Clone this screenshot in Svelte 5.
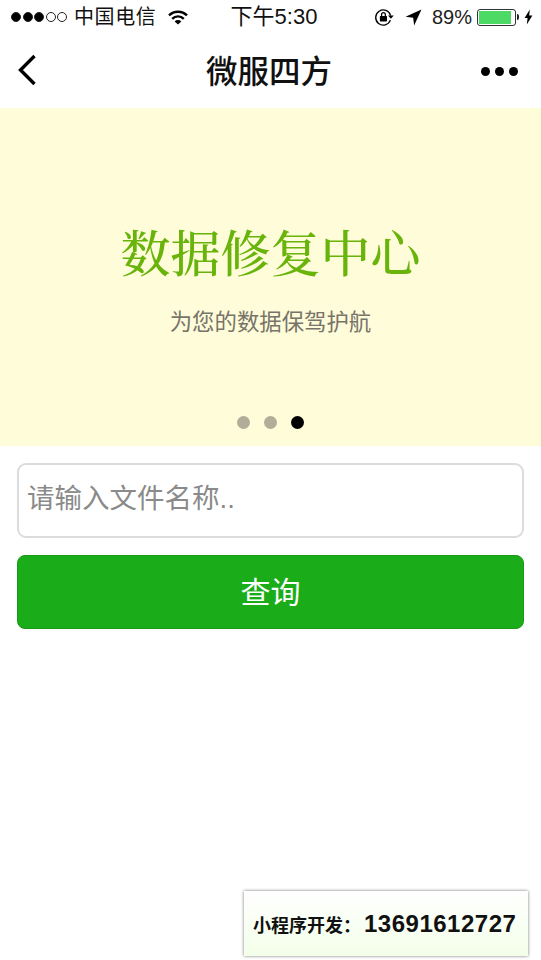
<script>
  const dots = [false, false, true];
</script>

<div class="page">
  <header class="status">
    <div class="side">
      <span class="signal">
        <i class="on"></i><i class="on"></i><i class="on"></i><i></i><i></i>
      </span>
      <span class="carrier">中国电信</span>
      <svg class="wifi" width="20" height="15" viewBox="0 0 20 15">
        <path d="M1 5.4a12.8 12.8 0 0 1 18 0" fill="none" stroke="#000" stroke-width="2.4"/>
        <path d="M4.2 8.8a8.2 8.2 0 0 1 11.6 0" fill="none" stroke="#000" stroke-width="2.4"/>
        <path d="M10 14.6 6.6 11.4a4.8 4.8 0 0 1 6.8 0z" fill="#000"/>
      </svg>
    </div>
    <div class="time">下午5:30</div>
    <div class="side right">
      <svg class="lock" width="21" height="19" viewBox="0 0 20 18">
        <path d="M15.8 7.2A7.2 7.2 0 1 0 15.6 11.5" fill="none" stroke="#000" stroke-width="1.3"/>
        <path d="M13.4 7.2h5.4l-2.7 3z" fill="#000"/>
        <rect x="5.6" y="7.6" width="6.8" height="5.2" rx=".6" fill="#000"/>
        <path d="M7.2 7.8V6.2a1.8 1.8 0 0 1 3.6 0v1.6" fill="none" stroke="#000" stroke-width="1.2"/>
      </svg>
      <svg class="arrow" width="17" height="17" viewBox="0 0 16 16">
        <path d="M15.5 .5 .5 7.4l7.2.9.9 7.2z" fill="#000"/>
      </svg>
      <span class="pct">89%</span>
      <span class="battery"><span class="fill"></span></span>
      <span class="nub"></span>
      <svg class="bolt" width="9" height="16" viewBox="0 0 9 15">
        <path d="M5.8 0 .6 8.4h3L2.8 15l5.6-9H5.2z" fill="#000"/>
      </svg>
    </div>
  </header>

  <nav class="nav">
    <svg class="back" width="20" height="32" viewBox="0 0 20 32">
      <path d="M17.5 2 3.5 16l14 14" fill="none" stroke="#000" stroke-width="3.4"/>
    </svg>
    <h1>微服四方</h1>
    <div class="more"><i></i><i></i><i></i></div>
  </nav>

  <section class="banner">
    <h2>数据修复中心</h2>
    <p>为您的数据保驾护航</p>
    <div class="dots">
      {#each dots as active}
        <span class="dot" class:active></span>
      {/each}
    </div>
  </section>

  <main class="form">
    <input class="field" placeholder="请输入文件名称.." />
    <button class="query">查询</button>
  </main>

  <aside class="ad">
    <span class="ad-label">小程序开发：</span><span class="ad-phone">13691612727</span>
  </aside>
</div>

<style>
  :global(body) {
    margin: 0;
    background: #fff;
  }
  .page {
    position: relative;
    width: 541px;
    height: 960px;
    overflow: hidden;
    background: #fff;
    font-family: "Liberation Sans", "Noto Sans CJK SC", sans-serif;
    color: #000;
  }
  .status {
    height: 36px;
    display: grid;
    grid-template-columns: 1fr auto 1fr;
    align-items: center;
    padding: 0 8px 2px 11px;
    box-sizing: border-box;
  }
  .side {
    display: flex;
    align-items: center;
  }
  .side.right {
    justify-content: flex-end;
  }
  .signal {
    display: flex;
    gap: 1.5px;
  }
  .signal i {
    width: 10px;
    height: 10px;
    box-sizing: border-box;
    border: 1px solid #222;
    border-radius: 50%;
  }
  .signal i.on {
    background: #000;
  }
  .carrier {
    margin-left: 7px;
    font-size: 20px;
    letter-spacing: 0.6px;
    color: #111;
    line-height: 24px;
  }
  .wifi {
    margin-left: 12px;
  }
  .time {
    font-size: 22px;
    line-height: 24px;
    margin-left: 4px;
    color: #111;
  }
  .lock {
    margin-right: -2px;
  }
  .arrow {
    margin-left: 12px;
  }
  .pct {
    margin-left: 10px;
    font-size: 20px;
    line-height: 24px;
    color: #222;
  }
  .battery {
    margin-left: 5px;
    width: 39px;
    height: 17px;
    box-sizing: border-box;
    border: 1px solid #333;
    border-radius: 3px;
    padding: 1px;
    display: flex;
  }
  .fill {
    width: 32px;
    background: #4cd964;
  }
  .nub {
    width: 2px;
    height: 6px;
    margin-left: 1px;
    background: #222;
    border-radius: 0 2px 2px 0;
  }
  .bolt {
    margin-left: 5px;
  }
  .nav {
    height: 72px;
    display: flex;
    align-items: center;
    justify-content: space-between;
    padding: 0 23px 4px 17px;
    box-sizing: border-box;
    position: relative;
  }
  h1 {
    position: absolute;
    left: 0;
    right: 3px;
    top: 14px;
    margin: 0;
    text-align: center;
    font-size: 31.5px;
    line-height: 44px;
    font-weight: 500;
    pointer-events: none;
    color: #111;
  }
  .back {
    display: block;
  }
  .more {
    display: flex;
    gap: 5px;
    margin-top: 2px;
  }
  .more i {
    width: 9px;
    height: 9px;
    border-radius: 50%;
    background: #000;
  }
  .banner {
    height: 338px;
    background: #fffcd9;
    display: flex;
    flex-direction: column;
    align-items: center;
    position: relative;
  }
  h2 {
    margin: 117px 0 0;
    font-family: "Liberation Serif", "Noto Serif CJK SC", "Noto Sans CJK SC", serif;
    font-size: 50px;
    line-height: 60px;
    font-weight: 500;
    color: #69b40b;
  }
  .banner p {
    margin: 23px 0 0;
    font-size: 22.4px;
    line-height: 30px;
    color: #77746a;
  }
  .dots {
    position: absolute;
    bottom: 17px;
    left: 236.5px;
    display: flex;
    gap: 13.5px;
  }
  .dot {
    width: 13.5px;
    height: 13.5px;
    border-radius: 50%;
    background: #b0ae98;
  }
  .dot.active {
    background: #000;
  }
  .form {
    padding: 17px 17px 0;
    display: flex;
    flex-direction: column;
    gap: 17px;
  }
  .field {
    height: 75px;
    box-sizing: border-box;
    border: 2px solid #dcdcdc;
    border-radius: 9px;
    padding: 0 8px 4px;
    font-family: inherit;
    font-size: 27.5px;
    outline: none;
    background: #fff;
  }
  .field::placeholder {
    color: #8a8a8a;
    opacity: 1;
  }
  .query {
    height: 74px;
    box-sizing: border-box;
    border: 1px solid #179b16;
    border-radius: 8px;
    background: #1aad19;
    color: #fff;
    font-family: inherit;
    font-size: 30px;
    padding: 0 0 4px;
  }
  .ad {
    position: absolute;
    left: 244px;
    top: 891px;
    width: 284px;
    height: 65px;
    box-sizing: border-box;
    padding-top: 19px;
    padding-left: 9px;
    background: linear-gradient(#fff, #f3ffe9);
    box-shadow: 0 0 3px rgba(0, 0, 0, 0.55);
    white-space: nowrap;
    display: flex;
    align-items: baseline;
    font-weight: 700;
    color: #111;
  }
  .ad-label {
    font-size: 18px;
  }
  .ad-phone {
    font-size: 24px;
    margin-left: 3px;
    letter-spacing: 0.5px;
  }
</style>
